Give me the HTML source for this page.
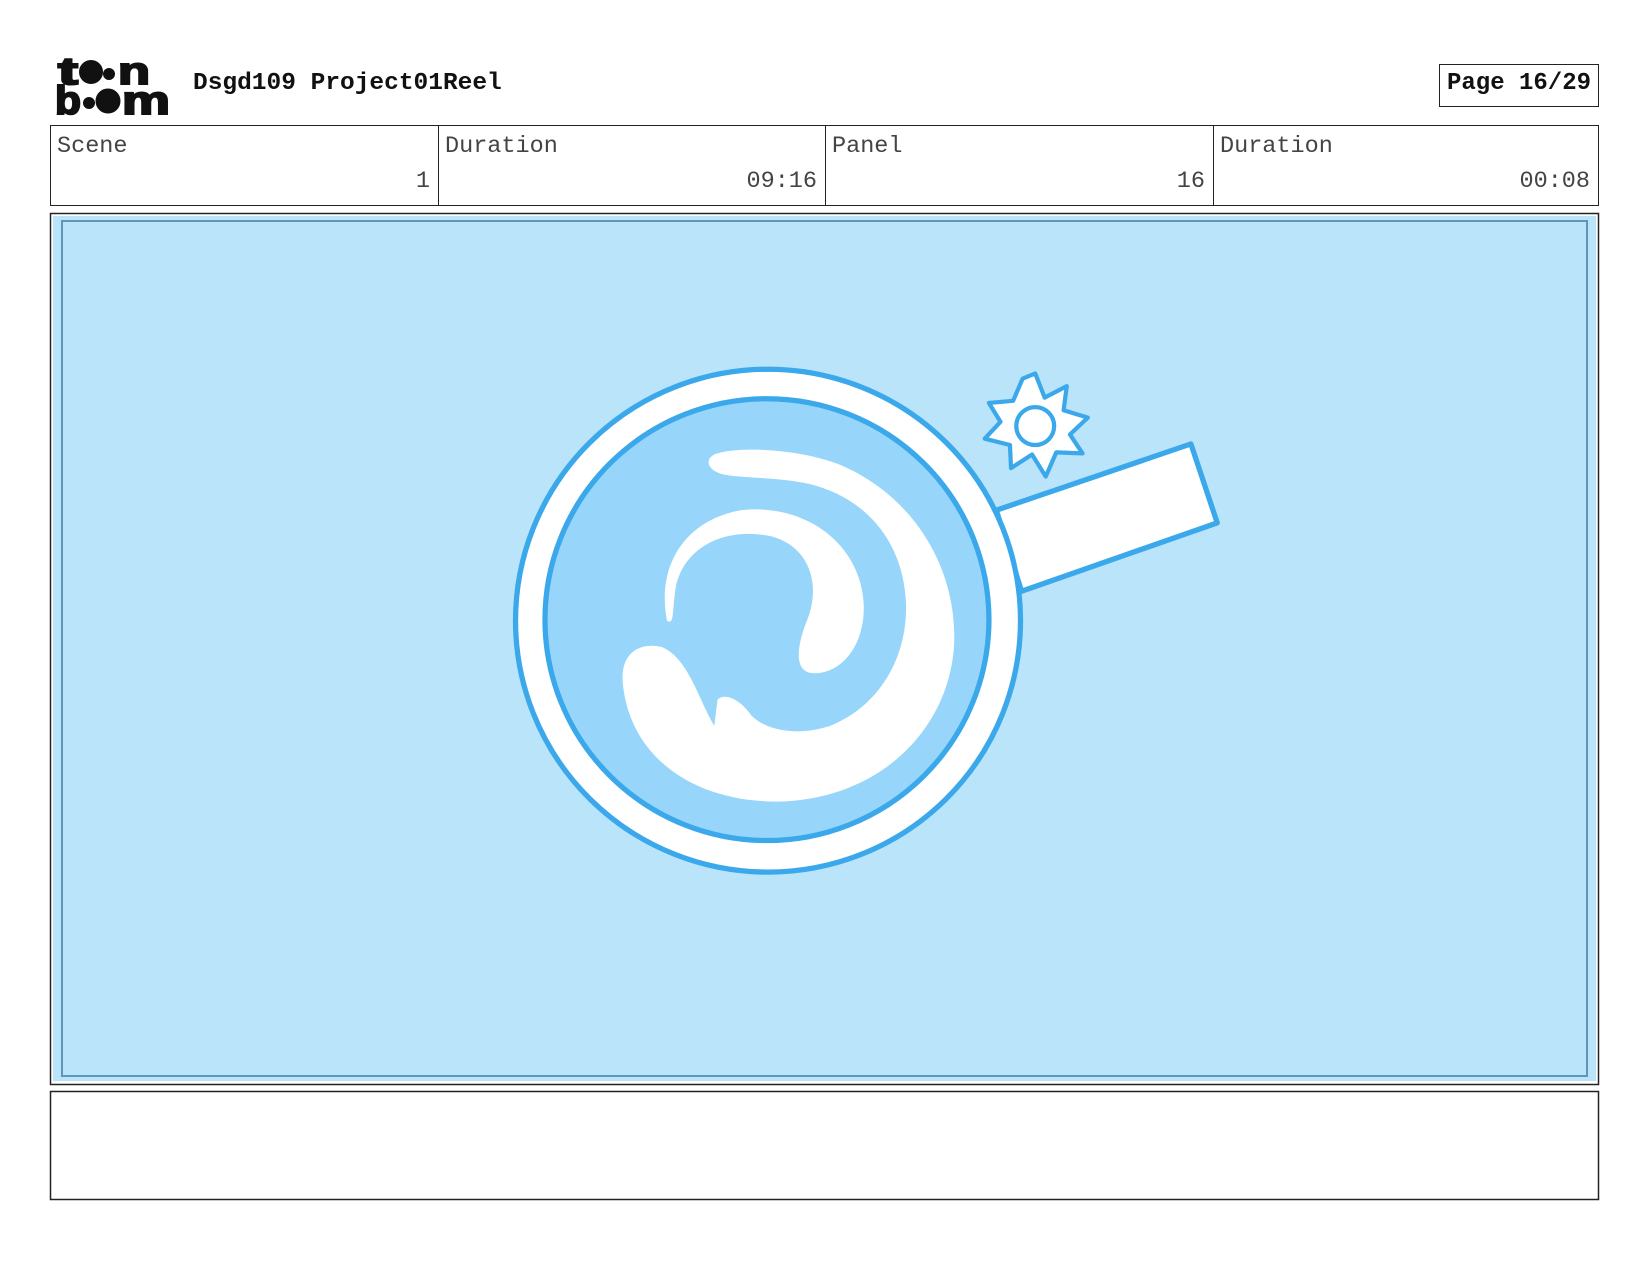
<!DOCTYPE html>
<html><head><meta charset="utf-8"><style>
html,body{margin:0;padding:0;background:#fff;width:1650px;height:1275px;overflow:hidden;position:relative;font-family:"Liberation Mono",monospace}
.a{position:absolute}
.title{left:193px;top:70px;font-size:24.5px;font-weight:bold;color:#111;line-height:28px}
.page{left:1439px;top:64px;width:160px;height:43px;border:1.5px solid #222;box-sizing:border-box;font-size:24px;font-weight:bold;line-height:38px;text-align:center;color:#111}
.tbl{left:50px;top:125px;width:1549px;height:81px;border:1.5px solid #222;box-sizing:border-box}
.cell{position:absolute;top:0;height:100%;border-left:1.5px solid #222;box-sizing:border-box}
.lbl{position:absolute;left:6px;top:7px;font-size:23.5px;color:#444}
.val{position:absolute;right:8px;top:42px;font-size:23.5px;color:#444}
</style></head><body>
<svg class="a" style="left:0;top:0" width="1650" height="1275">
<g font-family="Liberation Sans, sans-serif" font-weight="bold" fill="#111" stroke="#111" stroke-width="2">
<text x="58" y="84" font-size="38" textLength="20" lengthAdjust="spacingAndGlyphs">t</text>
<circle cx="91" cy="72" r="11"/><circle cx="109" cy="74" r="5"/>
<text x="118" y="84" font-size="38" textLength="32" lengthAdjust="spacingAndGlyphs">n</text>
<text x="55" y="114" font-size="40" textLength="26" lengthAdjust="spacingAndGlyphs">b</text>
<circle cx="89" cy="103" r="5"/><circle cx="108" cy="101" r="11.5"/>
<text x="122" y="114" font-size="40" textLength="48" lengthAdjust="spacingAndGlyphs">m</text>
</g>
<rect x="50.5" y="213.5" width="1548" height="871" fill="#fff" stroke="#222" stroke-width="1.5"/>
<rect x="53" y="216" width="1543" height="865" fill="#b9e4f9"/>
<rect x="62" y="221" width="1525" height="855" fill="none" stroke="#5f95b8" stroke-width="2"/>
<rect x="50.5" y="1091.5" width="1548" height="108" fill="#fff" stroke="#222" stroke-width="1.5"/>
<g transform="translate(-1,-0) scale(1.052)">
<polygon points="948,485 1133,422 1158,497 972,562" fill="#fff" stroke="#3aa8ea" stroke-width="5" stroke-linejoin="round"/>
<g transform="translate(985,405)">
<polygon points="0,-50 9,-27 30,-38 27,-15 50,-8 33,8 45,26 20,25 10,48 -3,27 -23,40 -24,18 -48,12 -33,-4 -44,-22 -21,-24 -12,-45" fill="#fff" stroke="#3aa8ea" stroke-width="4" stroke-linejoin="round"/>
<circle r="18" fill="none" stroke="#3aa8ea" stroke-width="4"/>
</g>
<ellipse cx="731" cy="590" rx="240" ry="239" fill="#fff" stroke="#3aa8ea" stroke-width="5"/>
<ellipse cx="730" cy="589" rx="211" ry="210" fill="#97d6fa" stroke="#3aa8ea" stroke-width="5"/>
<path fill="#fff" d="M680,432 C700,424 760,426 800,442 C870,472 910,540 908,610 C905,690 840,760 740,762 C660,762 600,720 593,650 C590,620 610,610 630,615 C655,625 665,665 680,690 L683,665 C690,658 705,665 715,680 C730,695 760,700 790,690 C840,670 865,620 862,570 C858,510 820,472 770,460 C740,453 700,455 685,450 C672,445 672,436 680,432 Z"/>
<path fill="#fff" d="M635,590 C625,540 650,495 705,485 C770,478 820,520 822,575 C823,615 800,640 775,640 C755,640 758,615 768,590 C782,555 770,520 735,510 C690,500 650,520 643,560 C640,580 642,595 635,590 Z"/>
</g>
</svg>
<div class="a title">Dsgd109 Project01Reel</div>
<div class="a page">Page 16/29</div>
<div class="a tbl">
<div class="cell" style="left:0;width:387px;border-left:none"><span class="lbl">Scene</span><span class="val">1</span></div>
<div class="cell" style="left:387px;width:387px"><span class="lbl">Duration</span><span class="val">09:16</span></div>
<div class="cell" style="left:774px;width:388px"><span class="lbl">Panel</span><span class="val">16</span></div>
<div class="cell" style="left:1162px;width:385px"><span class="lbl">Duration</span><span class="val">00:08</span></div>
</div>
</body></html>
